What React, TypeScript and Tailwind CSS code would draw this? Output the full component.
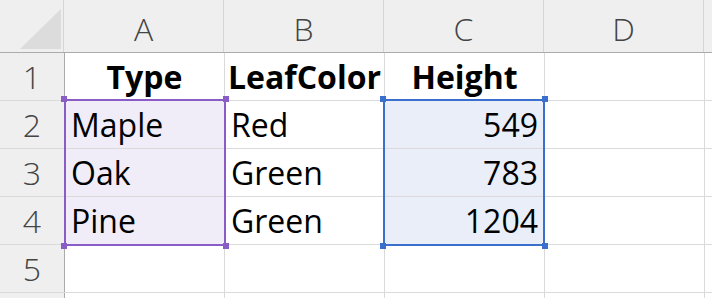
import React from "react"

const COLS = ["A", "B", "C", "D"]

const ROWS = [
  { n: 1, cells: ["Type", "LeafColor", "Height", ""] },
  { n: 2, cells: ["Maple", "Red", "549", ""] },
  { n: 3, cells: ["Oak", "Green", "783", ""] },
  { n: 4, cells: ["Pine", "Green", "1204", ""] },
  { n: 5, cells: ["", "", "", ""] },
]

function Handle({ className }: { className: string }) {
  return <div className={`absolute w-[6px] h-[6px] ${className}`} />
}

function Selection({ left, color }: { left: string; color: "purple" | "blue" }) {
  const border = color === "purple" ? "border-[#8a5cc5]" : "border-[#3a6fcd]"
  const fill = color === "purple" ? "bg-[#8a5cc5]" : "bg-[#3a6fcd]"
  return (
    <div className={`absolute top-[99px] ${left} w-[162px] h-[147px] border-2 ${border} pointer-events-none`}>
      <Handle className={`-left-[5px] -top-[5px] ${fill}`} />
      <Handle className={`-right-[5px] -top-[5px] ${fill}`} />
      <Handle className={`-left-[5px] -bottom-[5px] ${fill}`} />
      <Handle className={`-right-[5px] -bottom-[5px] ${fill}`} />
    </div>
  )
}

export default function App() {
  return (
    <div className="relative w-[712px] h-[298px] overflow-hidden bg-white font-['Open_Sans',sans-serif]">
      {/* Column header */}
      <div className="flex h-[53px] bg-[#efefef] border-b border-[#ababab]">
        <div className="relative w-[64px] shrink-0 border-r border-[#d5d5d5]">
          <svg className="absolute left-[20px] top-[9px]" width="41" height="40" viewBox="0 0 41 40">
            <polygon points="41,0 41,40 0,40" fill="#dcdcdc" />
          </svg>
        </div>
        {COLS.map((c) => (
          <div
            key={c}
            className="w-[160px] shrink-0 border-r border-[#d5d5d5] flex items-center justify-center pt-[6px] text-[32px] font-light text-[#444]"
          >
            {c}
          </div>
        ))}
        <div className="flex-1" />
      </div>

      {/* Rows */}
      {ROWS.map((row) => (
        <div key={row.n} className="flex h-[48px] border-b border-[#dadada]">
          <div className="w-[65px] shrink-0 bg-[#efefef] border-r border-[#ababab] flex items-center justify-center text-[32px] font-light text-[#444]">
            {row.n}
          </div>
          {row.cells.map((v, i) => {
            const sel = row.n >= 2 && row.n <= 4
            const bg = sel && i === 0 ? "bg-[#f0edf8]" : sel && i === 2 ? "bg-[#e9eef8]" : "bg-white"
            const align =
              row.n === 1 ? "justify-center font-bold" : i === 2 ? "justify-end pr-[6px]" : "justify-start pl-[6px]"
            return (
              <div
                key={i}
                className={`w-[160px] shrink-0 border-r border-[#dadada] flex items-center text-[32px] text-black ${bg} ${align}`}
              >
                {v}
              </div>
            )
          })}
          <div className="flex-1" />
        </div>
      ))}

      {/* Row 6, cut off at the bottom edge */}
      <div className="flex h-[48px]">
        <div className="w-[65px] shrink-0 bg-[#efefef] border-r border-[#ababab]" />
        {COLS.map((c) => (
          <div key={c} className="w-[160px] shrink-0 border-r border-[#dadada]" />
        ))}
      </div>

      <Selection left="left-[64px]" color="purple" />
      <Selection left="left-[383px]" color="blue" />
    </div>
  )
}
